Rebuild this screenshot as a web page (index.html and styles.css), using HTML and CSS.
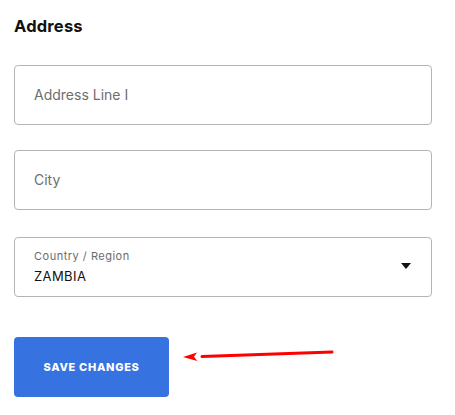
FILE: index.html
```html
<!DOCTYPE html>
<html>
<head>
<meta charset="utf-8">
<link rel="stylesheet" href="styles.css">
</head>
<body>
<div class="page">
  <h2 class="title">Address</h2>
  <div class="fields">
    <div class="field"><span class="placeholder">Address Line I</span></div>
    <div class="field"><span class="placeholder">City</span></div>
    <div class="field select">
      <div class="select-text">
        <span class="label">Country / Region</span>
        <span class="value">ZAMBIA</span>
      </div>
      <svg class="caret" width="10" height="6" viewBox="0 0 10 6"><path d="M0 0H10L5 6Z" fill="#111"/></svg>
    </div>
  </div>
  <div class="actions">
    <button class="save">SAVE CHANGES</button>
    <svg class="arrow" width="152" height="20" viewBox="0 0 152 20">
      <line x1="150" y1="4" x2="20" y2="8.6" stroke="#f00" stroke-width="3" stroke-linecap="round"/>
      <path d="M1 9 L15 4.5 L12 8.8 L15.3 13 Z" fill="#f00"/>
    </svg>
  </div>
</div>
</body>
</html>
```
FILE: styles.css
```css
* { box-sizing: border-box; }
body { margin: 0; background: #fff; font-family: Inter, "Noto Sans", sans-serif; }
.page { padding: 15px 23px 0 14px; }
.title { margin: 0; font-size: 16.5px; font-weight: 700; color: #111; line-height: 22px; letter-spacing: 0.2px; }
.fields { margin-top: 28px; display: flex; flex-direction: column; gap: 25px; }
.field { height: 60px; border: 1px solid #b4b4b4; border-radius: 4px; display: flex; align-items: center; padding: 0 19px 2px; }
.fields .field:nth-child(3) { margin-top: 2px; }
.placeholder { font-size: 14px; color: #6e6e6e; }
.select { justify-content: space-between; padding-right: 20px; padding-bottom: 0; }
.select-text { display: flex; flex-direction: column; gap: 5px; padding-bottom: 1px; }
.label { font-size: 11px; color: #6b6b6b; letter-spacing: 0.5px; }
.value { font-size: 13px; color: #111; letter-spacing: 0.4px; }
.caret { margin-top: -3px; }
.actions { position: relative; margin-top: 40px; }
.save { width: 155px; height: 60px; border: 0; border-radius: 4px; background: #3673e0; color: #fff; font-family: Inter, sans-serif; font-size: 11px; font-weight: 800; letter-spacing: 0.7px; padding: 0; }
.arrow { position: absolute; left: 168px; top: 11px; }
```
